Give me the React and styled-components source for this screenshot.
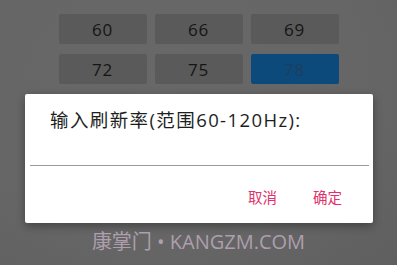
import React from "react";
import styled, { createGlobalStyle } from "styled-components";

const GlobalStyle = createGlobalStyle`
  html, body {
    margin: 0;
    padding: 0;
    background: #676767;
  }
  * { box-sizing: border-box; }
`;

const Screen = styled.div`
  position: relative;
  width: 397px;
  height: 265px;
  overflow: hidden;
  background: radial-gradient(ellipse at 40% 30%, #686868 0%, #666666 60%, #5f5f5f 100%);
  font-family: "Noto Sans", "Noto Sans CJK SC", sans-serif;
`;

const RateGrid = styled.div`
  display: grid;
  grid-template-columns: repeat(3, 88px);
  grid-auto-rows: 30px;
  column-gap: 8px;
  row-gap: 10px;
  justify-content: center;
  padding-top: 14px;
`;

const RateButton = styled.div`
  display: flex;
  align-items: center;
  justify-content: center;
  border-radius: 2px;
  background: ${({ $active }) => ($active ? "#0c4a7b" : "#5a5a5a")};
  color: ${({ $active }) => ($active ? "#1d3e61" : "#151515")};
  font-family: "Open Sans", "Noto Sans", sans-serif;
  font-size: 17px;
  letter-spacing: 0.8px;
`;

const Dialog = styled.div`
  position: absolute;
  left: 25px;
  top: 94px;
  width: 348px;
  height: 129px;
  background: #ffffff;
  border-radius: 2px;
  box-shadow: 0 3px 10px rgba(0, 0, 0, 0.35);
  display: flex;
  flex-direction: column;
`;

const Title = styled.div`
  padding: 13px 0 0 25px;
  font-family: "Open Sans", "Noto Sans CJK SC", sans-serif;
  font-size: 18.5px;
  letter-spacing: 1.4px;
  color: #1e1e1e;
  line-height: 26px;
`;

const InputLine = styled.div`
  margin: 32px 4px 0 5px;
  height: 1px;
  background: #9a9a9a;
`;

const Actions = styled.div`
  display: flex;
  justify-content: flex-end;
  gap: 36px;
  padding: 22px 31px 0 0;
`;

const ActionButton = styled.span`
  font-family: "Noto Sans CJK SC", sans-serif;
  font-size: 14.5px;
  line-height: 18px;
  color: #e0316c;
`;

const Watermark = styled.div`
  position: absolute;
  left: 0;
  right: 0;
  top: 229px;
  text-align: center;
  font-family: "Open Sans", "Noto Sans CJK SC", sans-serif;
  font-size: 20px;
  line-height: 26px;
  color: #ad9fad;
`;

const rates = [60, 66, 69, 72, 75, 78];

export default function App() {
  return (
    <>
      <GlobalStyle />
      <Screen>
        <RateGrid>
          {rates.map((r) => (
            <RateButton key={r} $active={r === 78}>
              {r}
            </RateButton>
          ))}
          <RateButton />
          <RateButton />
          <RateButton />
        </RateGrid>
        <Dialog>
          <Title>输入刷新率(范围60-120Hz):</Title>
          <InputLine />
          <Actions>
            <ActionButton>取消</ActionButton>
            <ActionButton>确定</ActionButton>
          </Actions>
        </Dialog>
        <Watermark>康掌门 • KANGZM.COM</Watermark>
      </Screen>
    </>
  );
}
